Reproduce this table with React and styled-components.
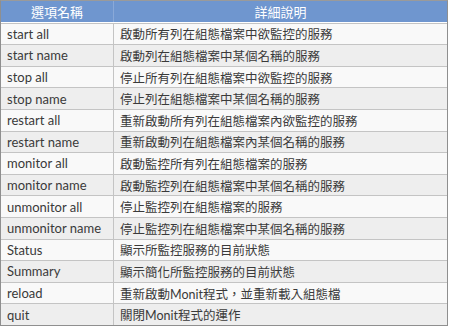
import React from "react";
import styled, { createGlobalStyle } from "styled-components";

const Global = createGlobalStyle`
  html, body { margin: 0; padding: 0; background: #ffffff; }
  body { font-family: "Lato", "Noto Sans CJK TC", sans-serif; }
`;

const Table = styled.div`
  width: 448px;
  border: 1px solid #8f8f8f;
  border-top-color: #9a9a9a;
  display: grid;
  grid-template-columns: 112px 1fr;
  grid-auto-rows: 21.6px;
  box-sizing: border-box;
  font-family: "Lato", "Noto Sans CJK TC", sans-serif;
`;

const HeadCell = styled.div`
  background: #6f96cf;
  color: #ffffff;
  font-size: 13px;
  display: flex;
  align-items: center;
  justify-content: center;
  height: 21px;
  border-left: ${(p) => (p.$second ? "1px solid #8aa9d8" : "none")};
`;

const Cell = styled.div`
  background: ${(p) => (p.$alt ? "#eeeeee" : "#f9f9f9")};
  color: #3a3a3a;
  font-size: ${(p) => (p.$cjk ? "12.5px" : "13px")};
  display: flex;
  align-items: center;
  padding-left: ${(p) => (p.$cjk ? "6px" : "6px")};
  border-top: 1px solid #c4c4c4;
  border-left: ${(p) => (p.$cjk ? "1px solid #c4c4c4" : "none")};
  white-space: nowrap;
  overflow: hidden;
`;

const rows = [
  ["start all", "啟動所有列在組態檔案中欲監控的服務"],
  ["start name", "啟動列在組態檔案中某個名稱的服務"],
  ["stop all", "停止所有列在組態檔案中欲監控的服務"],
  ["stop name", "停止列在組態檔案中某個名稱的服務"],
  ["restart all", "重新啟動所有列在組態檔案內欲監控的服務"],
  ["restart name", "重新啟動列在組態檔案內某個名稱的服務"],
  ["monitor all", "啟動監控所有列在組態檔案的服務"],
  ["monitor name", "啟動監控列在組態檔案中某個名稱的服務"],
  ["unmonitor all", "停止監控列在組態檔案的服務"],
  ["unmonitor name", "停止監控列在組態檔案中某個名稱的服務"],
  ["Status", "顯示所監控服務的目前狀態"],
  ["Summary", "顯示簡化所監控服務的目前狀態"],
  ["reload", "重新啟動Monit程式，並重新載入組態檔"],
  ["quit", "關閉Monit程式的運作"],
];

export default function App() {
  return (
    <>
      <Global />
      <Table>
        <HeadCell>選項名稱</HeadCell>
        <HeadCell $second>詳細說明</HeadCell>
        {rows.map(([k, v], i) => (
          <React.Fragment key={k}>
            <Cell $alt={i % 2 === 1}>{k}</Cell>
            <Cell $alt={i % 2 === 1} $cjk>{v}</Cell>
          </React.Fragment>
        ))}
      </Table>
    </>
  );
}
